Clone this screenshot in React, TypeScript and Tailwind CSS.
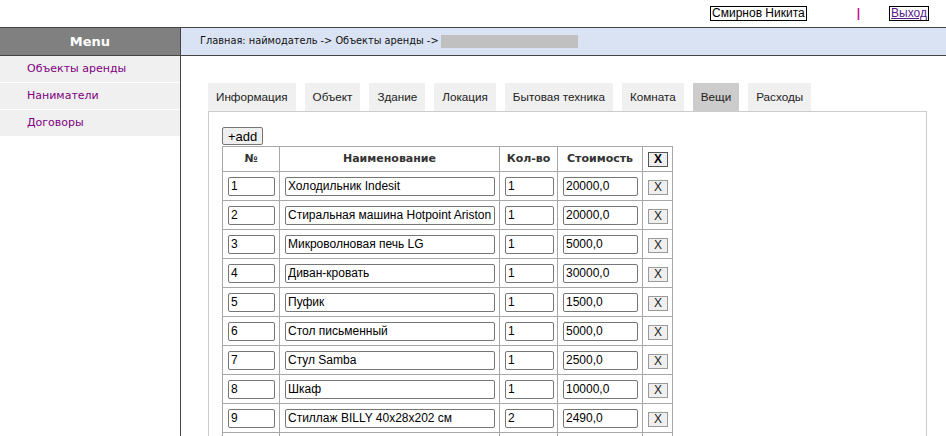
import React from 'react'

const tabs = ['Информация', 'Объект', 'Здание', 'Локация', 'Бытовая техника', 'Комната', 'Вещи', 'Расходы']

const items = [
  { n: '1', name: 'Холодильник Indesit', qty: '1', cost: '20000,0' },
  { n: '2', name: 'Стиральная машина Hotpoint Ariston', qty: '1', cost: '20000,0' },
  { n: '3', name: 'Микроволновая печь LG', qty: '1', cost: '5000,0' },
  { n: '4', name: 'Диван-кровать', qty: '1', cost: '30000,0' },
  { n: '5', name: 'Пуфик', qty: '1', cost: '1500,0' },
  { n: '6', name: 'Стол письменный', qty: '1', cost: '5000,0' },
  { n: '7', name: 'Стул Samba', qty: '1', cost: '2500,0' },
  { n: '8', name: 'Шкаф', qty: '1', cost: '10000,0' },
  { n: '9', name: 'Стиллаж BILLY 40x28x202 см', qty: '2', cost: '2490,0' },
  { n: '10', name: 'Зеркало', qty: '1', cost: '1000,0' },
]

const menu = ['Объекты аренды', 'Наниматели', 'Договоры']

const verdana = "font-['DejaVu_Sans',Verdana,sans-serif]"
const arial = "font-['Liberation_Sans',Arial,sans-serif]"

function Field({ value, w }: { value: string; w: string }) {
  return (
    <input
      readOnly
      value={value}
      className={`${w} h-[19px] border border-[#767676] rounded-[2px] bg-white px-[2px] text-[12px] text-black outline-none ${arial} block`}
    />
  )
}

function ItemRow({ n, name, qty, cost }: { n: string; name: string; qty: string; cost: string }) {
  const td = 'border border-[#a8a8a8] h-[29px] pl-[5px] pr-[4px] align-middle'
  return (
    <tr>
      <td className={td}><Field value={n} w="w-[47px]" /></td>
      <td className={td}><Field value={name} w="w-[210px]" /></td>
      <td className={td}><Field value={qty} w="w-[49px]" /></td>
      <td className={td}><Field value={cost} w="w-[75px]" /></td>
      <td className={td}>
        <button className={`block w-[20px] h-[15px] mt-[2px] bg-[#efefef] border border-[#9a9a9a] text-[12px] leading-[13px] text-[#222] ${arial}`}>
          X
        </button>
      </td>
    </tr>
  )
}

export default function App() {
  return (
    <div className="h-screen flex flex-col bg-white overflow-hidden">
      {/* top bar */}
      <div className={`h-[27px] shrink-0 flex items-start justify-end pt-[6px] pr-[17px] text-[12px] ${arial}`}>
        <span className="border border-black h-[15px] leading-[13px] px-[1px] text-black">Смирнов Никита</span>
        <span className="ml-[50px] mr-[29px] text-[#c0109a] font-bold leading-[14px]">|</span>
        <a href="#" className="border border-black h-[15px] leading-[13px] px-[1px] text-[#551a8b] underline">Выход</a>
      </div>

      <div className="flex flex-1 border-t border-[#444]">
        {/* sidebar */}
        <div className="w-[181px] shrink-0 border-r border-[#444] flex flex-col">
          <div className={`h-[28px] bg-[#808080] border-b border-[#444] flex items-center justify-center text-white font-bold text-[13px] ${verdana}`}>
            Menu
          </div>
          {menu.map((m) => (
            <div key={m} className={`h-[26px] mb-[1px] bg-[#f0f0f0] flex items-center pl-[27px] text-[11px] text-[#800080] ${verdana}`}>
              {m}
            </div>
          ))}
        </div>

        {/* main */}
        <div className="flex-1 flex flex-col">
          <div className={`h-[28px] bg-[#dae3f3] border-b border-[#444] flex items-center pl-[19px] text-[9.8px] text-[#111] ${verdana}`}>
            <span>Главная: наймодатель -&gt; Объекты аренды -&gt;</span>
            <span className="ml-[2px] w-[137px] h-[13px] bg-[#c0c0c0]" />
          </div>

          <div className="pt-[27px] pl-[27px] pr-[19px] flex-1 flex flex-col">
            <div className={`flex gap-[9px] ${arial} text-[11.7px] text-[#222]`}>
              {tabs.map((t) => (
                <div
                  key={t}
                  className={`h-[28px] px-[8px] flex items-center ${t === 'Вещи' ? 'bg-[#cccccc]' : 'bg-[#f0f0f0]'}`}
                >
                  {t}
                </div>
              ))}
            </div>

            <div className="flex-1 border-t border-l border-r border-[#cccccc] pt-[15px] pl-[13px]">
              <button className={`block h-[18px] px-[5px] bg-[#efefef] border border-[#767676] rounded-[2px] text-[13px] leading-[15px] text-black ${arial}`}>
                +add
              </button>
              <table className="border-collapse table-fixed w-[450px] mt-[1px]">
                <colgroup>
                  <col className="w-[57px]" />
                  <col className="w-[220px]" />
                  <col className="w-[58px]" />
                  <col className="w-[85px]" />
                  <col className="w-[30px]" />
                </colgroup>
                <thead>
                  <tr className={`${verdana} text-[11px] font-bold text-[#333]`}>
                    <td className="border border-[#a8a8a8] h-[25px] text-center align-middle">№</td>
                    <td className="border border-[#a8a8a8] text-center align-middle">Наименование</td>
                    <td className="border border-[#a8a8a8] text-center align-middle">Кол-во</td>
                    <td className="border border-[#a8a8a8] text-center align-middle">Стоимость</td>
                    <td className="border border-[#a8a8a8] pl-[5px] align-middle">
                      <button className={`block w-[20px] h-[15px] bg-[#efefef] border border-[#555] text-[12px] leading-[13px] font-bold text-black ${arial}`}>
                        X
                      </button>
                    </td>
                  </tr>
                </thead>
                <tbody>
                  {items.map((it) => (
                    <ItemRow key={it.n} {...it} />
                  ))}
                </tbody>
              </table>
            </div>
          </div>
        </div>
      </div>
    </div>
  )
}
